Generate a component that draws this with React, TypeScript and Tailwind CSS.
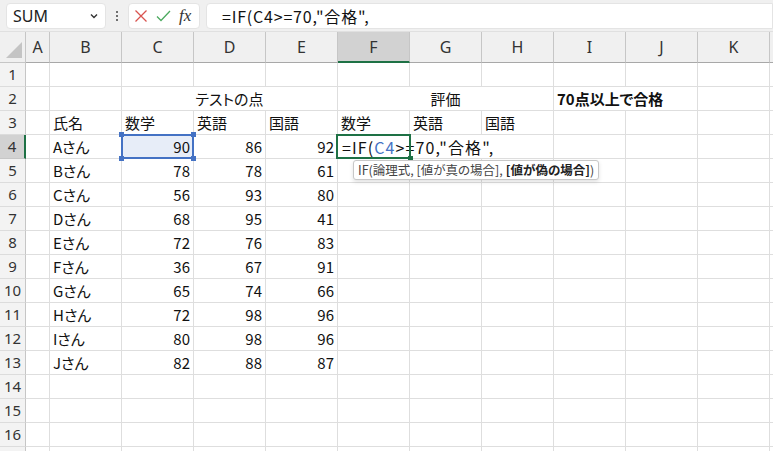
import React from 'react';

const COLS = ['A', 'B', 'C', 'D', 'E', 'F', 'G', 'H', 'I', 'J', 'K', ''];

const scores: [string, number, number, number][] = [
  ['Aさん', 90, 86, 92],
  ['Bさん', 78, 78, 61],
  ['Cさん', 56, 93, 80],
  ['Dさん', 68, 95, 41],
  ['Eさん', 72, 76, 83],
  ['Fさん', 36, 67, 91],
  ['Gさん', 65, 74, 66],
  ['Hさん', 72, 98, 96],
  ['Iさん', 80, 98, 96],
  ['Jさん', 82, 88, 87],
];

const cellBase =
  'border-r border-b border-[#dedede] flex items-center px-[3px] whitespace-nowrap text-[15px] text-[#111] leading-none';

const Cell = ({ children, className = '' }: { children?: React.ReactNode; className?: string }) => (
  <div className={`${cellBase} ${className}`}>{children}</div>
);

const RowHead = ({ n, active }: { n: number; active?: boolean }) => (
  <div
    className={`flex items-center justify-center border-b text-[15px] text-[#333] font-['Noto_Sans',sans-serif] ${
      active
        ? 'bg-[#d2d2d2] border-r-2 border-r-[#1e7145] border-b-[#c6c6c6]'
        : 'bg-[#f3f3f3] border-r border-r-[#c6c6c6] border-b-[#dcdcdc]'
    }`}
  >
    {n < 17 ? n : ''}
  </div>
);

const TopBar = () => (
  <div className="h-[32px] bg-[#f0f0f0] flex items-center pl-[6px] gap-0 border-b border-[#e0e0e0]">
    <div className="w-[100px] h-[26px] bg-white rounded-[4px] border border-[#e4e4e4] flex items-center justify-between pl-[6px] pr-[6px] text-[16px] text-[#222] font-['Noto_Sans',sans-serif]">
      <span>SUM</span>
      <svg width="10" height="10" viewBox="0 0 10 10">
        <path d="M2 3.5 L5 6.5 L8 3.5" fill="none" stroke="#333" strokeWidth="1.4" />
      </svg>
    </div>
    <div className="w-[22px] flex flex-col items-center gap-[2px]">
      <span className="w-[2px] h-[2px] bg-[#444] rounded-full" />
      <span className="w-[2px] h-[2px] bg-[#444] rounded-full" />
      <span className="w-[2px] h-[2px] bg-[#444] rounded-full" />
    </div>
    <div className="w-[72px] h-[26px] bg-white rounded-[4px] border border-[#e4e4e4] flex items-center pl-[5px] gap-[8px]">
      <svg width="14" height="14" viewBox="0 0 14 14">
        <path d="M1.5 1.5 L12.5 12.5 M12.5 1.5 L1.5 12.5" stroke="#d9534f" strokeWidth="1.3" fill="none" />
      </svg>
      <svg width="15" height="14" viewBox="0 0 15 14">
        <path d="M1 7.5 L5 11.5 L14 2" stroke="#4caa5f" strokeWidth="1.3" fill="none" />
      </svg>
      <span className="font-['Liberation_Serif',serif] italic text-[17px] text-[#333] leading-none">fx</span>
    </div>
    <div className="ml-[6px] flex-1 h-[26px] bg-white rounded-l-[4px] border border-[#e4e4e4] flex items-center pl-[15px] text-[16px] tracking-[0.8px] text-[#111] font-['Noto_Sans_CJK_JP',sans-serif] [font-feature-settings:normal]">
      =IF(C4&gt;=70,"合格",
    </div>
  </div>
);

export default function App() {
  const rows: React.ReactNode[] = [];

  for (let r = 1; r <= 17; r++) {
    const active = r === 4;
    rows.push(<RowHead key={`h${r}`} n={r} active={active} />);
    const cells: React.ReactNode[] = [];
    if (r === 2) {
      cells.push(<Cell key="a" />, <Cell key="b" />);
      cells.push(
        <Cell key="c" className="col-span-3 justify-center">
          テストの点
        </Cell>
      );
      cells.push(
        <Cell key="f" className="col-span-3 justify-center">
          評価
        </Cell>
      );
      cells.push(
        <Cell key="i" className="col-span-2 font-bold">
          70点以上で合格
        </Cell>
      );
      cells.push(<Cell key="k" />, <Cell key="l" />);
    } else if (r === 3) {
      ['', '氏名', '数学', '英語', '国語', '数学', '英語', '国語', '', '', '', ''].forEach((t, i) =>
        cells.push(<Cell key={i}>{t}</Cell>)
      );
    } else if (r >= 4 && r <= 13) {
      const [name, a, b, c] = scores[r - 4];
      cells.push(<Cell key="a" />, <Cell key="b">{name}</Cell>);
      if (active) {
        cells.push(
          <div key="c" className={`${cellBase} justify-end relative bg-[#e7edf8]`}>
            {a}
            <div className="absolute left-[-1px] top-[-1px] right-[-1px] bottom-[-1px] border-2 border-[#4472c4]" />
            <span className="absolute left-[-3px] top-[-3px] w-[5px] h-[5px] bg-[#4472c4]" />
            <span className="absolute right-[-3px] top-[-3px] w-[5px] h-[5px] bg-[#4472c4]" />
            <span className="absolute left-[-3px] bottom-[-3px] w-[5px] h-[5px] bg-[#4472c4]" />
            <span className="absolute right-[-3px] bottom-[-3px] w-[5px] h-[5px] bg-[#4472c4]" />
          </div>
        );
      } else {
        cells.push(<Cell key="c" className="justify-end">{a}</Cell>);
      }
      cells.push(<Cell key="d" className="justify-end">{b}</Cell>);
      cells.push(<Cell key="e" className="justify-end">{c}</Cell>);
      if (active) {
        cells.push(
          <div key="f" className={`${cellBase} col-span-3 relative text-[16px] pl-[4px]`}>
            <span className="[font-feature-settings:normal] tracking-[1.1px]">
              =IF(<span className="text-[#4472c4]">C4</span>&gt;=70,"合格",
            </span>
            <div className="absolute left-[-2px] top-[-1px] w-[75px] bottom-[-1px] border-2 border-[#1e7145]" />
            <span className="absolute left-[70px] bottom-[-3px] w-[5px] h-[5px] bg-[#1e7145]" />
            <div className="absolute left-[15px] top-[25px] z-10 h-[20px] px-[4px] flex items-center bg-white border border-[#c8c8c8] rounded-[3px] shadow-[0_2px_4px_rgba(0,0,0,0.12)] text-[12.5px] text-[#444] leading-none">
              IF(論理式, [値が真の場合], <span className="font-semibold text-[#222] ml-[3px]">[値が偽の場合]</span>)
            </div>
          </div>
        );
        cells.push(<Cell key="i" />, <Cell key="j" />, <Cell key="k" />, <Cell key="l" />);
      } else {
        for (let i = 0; i < 7; i++) cells.push(<Cell key={`x${i}`} />);
      }
    } else {
      for (let i = 0; i < 12; i++) cells.push(<Cell key={`x${i}`} />);
    }
    rows.push(...cells);
  }

  return (
    <div className="w-[773px] h-[451px] overflow-hidden bg-white font-['Noto_Sans_CJK_JP',sans-serif] [font-feature-settings:'palt']">
      <TopBar />
      <div className="grid grid-cols-[26px_24px_repeat(11,72px)] grid-rows-[31px_repeat(17,24px)]">
        <div className="bg-[#f0f0f0] border-r border-b border-[#c6c6c6] relative">
          <svg className="absolute left-[6px] top-[10px]" width="16" height="16" viewBox="0 0 16 16">
            <path d="M16 0 L16 16 L0 16 Z" fill="#c4c4c4" />
          </svg>
        </div>
        {COLS.map((c, i) => (
          <div
            key={i}
            className={`flex items-center justify-center text-[16px] text-[#333] font-['Noto_Sans',sans-serif] border-r ${
              c === 'F'
                ? 'bg-[#d2d2d2] border-b-2 border-b-[#1e7145] border-r-[#c6c6c6]'
                : 'bg-[#f0f0f0] border-b border-b-[#a8a8a8] border-r-[#c6c6c6]'
            }`}
          >
            {c}
          </div>
        ))}
        {rows}
      </div>
    </div>
  );
}
